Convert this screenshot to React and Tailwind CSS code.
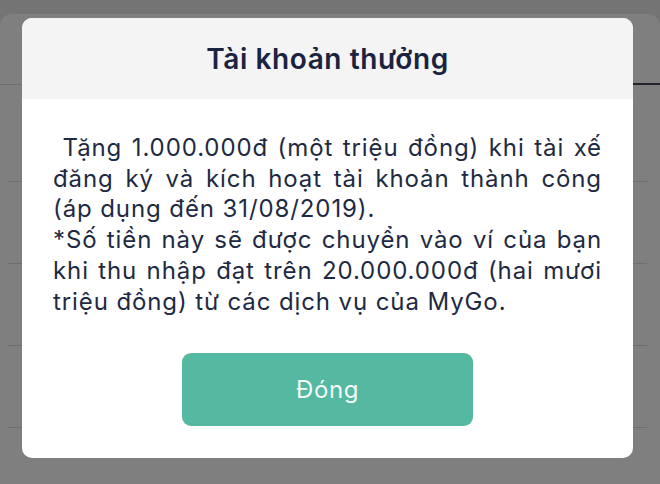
import React from "react";

const lines = [
  { text: "\u00a0Tặng 1.000.000đ (một triệu đồng) khi tài xế", justify: true },
  { text: "đăng ký và kích hoạt tài khoản thành công", justify: true },
  { text: "(áp dụng đến 31/08/2019).", justify: false },
  { text: "*Số tiền này sẽ được chuyển vào ví của bạn", justify: true },
  { text: "khi thu nhập đạt trên 20.000.000đ (hai mươi", justify: true },
  { text: "triệu đồng) từ các dịch vụ của MyGo.", justify: false },
];

// rows of the page that sits behind the dimmed overlay
const rows = ["h-[97px]", "h-[82px]", "h-[82px]", "h-[82px]"];

export default function App() {
  return (
    <div className="relative w-[660px] h-[484px] overflow-hidden bg-[#747474] font-['Inter','Noto_Sans',sans-serif]">
      <div className="mt-[14px] h-[470px] rounded-t-[12px] bg-[#7f7f7f]">
        <div className="h-[71px] flex">
          <div className="w-[22px] border-b border-[#6c6c6c]" />
          <div className="flex-1" />
          <div className="w-[27px] border-b-2 border-[#22222c]" />
        </div>
        {rows.map((h, i) => (
          <div key={i} className={`${h} ml-2 mr-[13px] border-b border-[#6e6e6e]`} />
        ))}
      </div>

      {/* Dialog */}
      <div className="absolute left-[22px] top-[18px] w-[611px] h-[440px] rounded-[10px] bg-white overflow-hidden flex flex-col">
        <div className="h-[81px] bg-[#f4f4f4] flex items-center justify-center">
          <h1 className="text-[28px] font-semibold text-[#1a2340] tracking-[0.6px]">Tài khoản thưởng</h1>
        </div>

        <div className="px-[31px] pt-[34px] text-[24px] leading-[30.7px] tracking-[0.9px] text-[#1e2a43]">
          {lines.map((l, i) => (
            <div
              key={i}
              className={l.justify ? "text-justify [text-align-last:justify]" : "text-left"}
            >
              {l.text}
            </div>
          ))}
        </div>

        <div className="flex justify-center mt-[36px]">
          <button className="w-[291px] h-[73px] rounded-[9px] bg-[#54b9a0] text-white/95 text-[24px] tracking-[0.6px]">
            Đóng
          </button>
        </div>
      </div>
    </div>
  );
}
